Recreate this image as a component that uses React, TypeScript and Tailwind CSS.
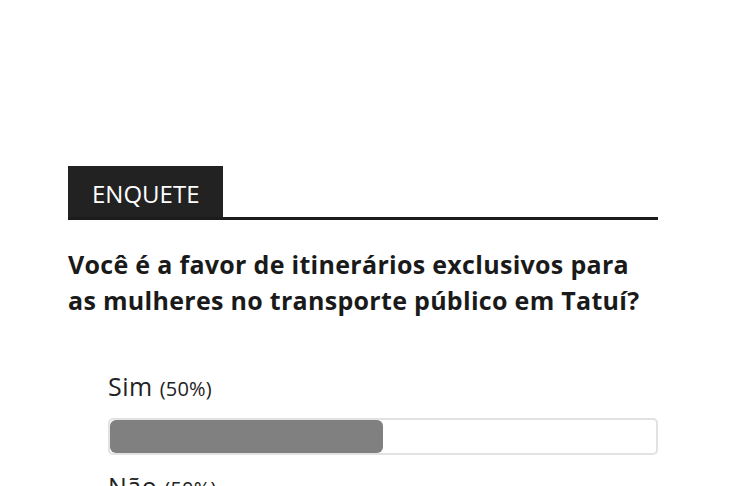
import React from 'react';

type Option = {
    label: string;
    percent: number;
};

const options: Option[] = [
    { label: 'Sim', percent: 50 },
    { label: 'Não', percent: 50 },
];

const PollBar: React.FC<Option> = ({ label, percent }) => (
    <div className="mb-[13px]">
        <p className="text-[25px] leading-[36px] tracking-[0.5px] text-[#222]">
            {label} <span className="text-[20px] tracking-[0.2px]">({percent}%)</span>
        </p>
        <div className="mt-[11px] h-[37px] w-full rounded-[5px] border-2 border-[#e2e2e2] bg-white">
            <div className="h-full rounded-[6px] bg-[#808080]" style={{ width: `${percent}%` }} />
        </div>
    </div>
);

export default function App() {
    return (
        <div
            className="h-[486px] w-[741px] overflow-hidden bg-white pt-[166px]"
            style={{ fontFamily: '"Open Sans", "Liberation Sans", sans-serif' }}
        >
            <div className="ml-[68px] w-[590px]">
                <div className="flex border-b-[3px] border-[#1c1c1c]">
                    <h2 className="h-[51px] bg-[#222] px-[24px] pt-[16px] text-[24px] leading-[24px] font-normal text-white">
                        ENQUETE
                    </h2>
                </div>

                <h3 className="mt-[26px] text-[25px] leading-[36px] tracking-[0.3px] font-bold text-[#1a1a1a]">
                    Você é a favor de itinerários exclusivos para as mulheres no transporte público em Tatuí?
                </h3>

                <div className="mt-[50px] pl-[40px]">
                    {options.map((o) => (
                        <PollBar key={o.label} {...o} />
                    ))}
                </div>
            </div>
        </div>
    );
}
